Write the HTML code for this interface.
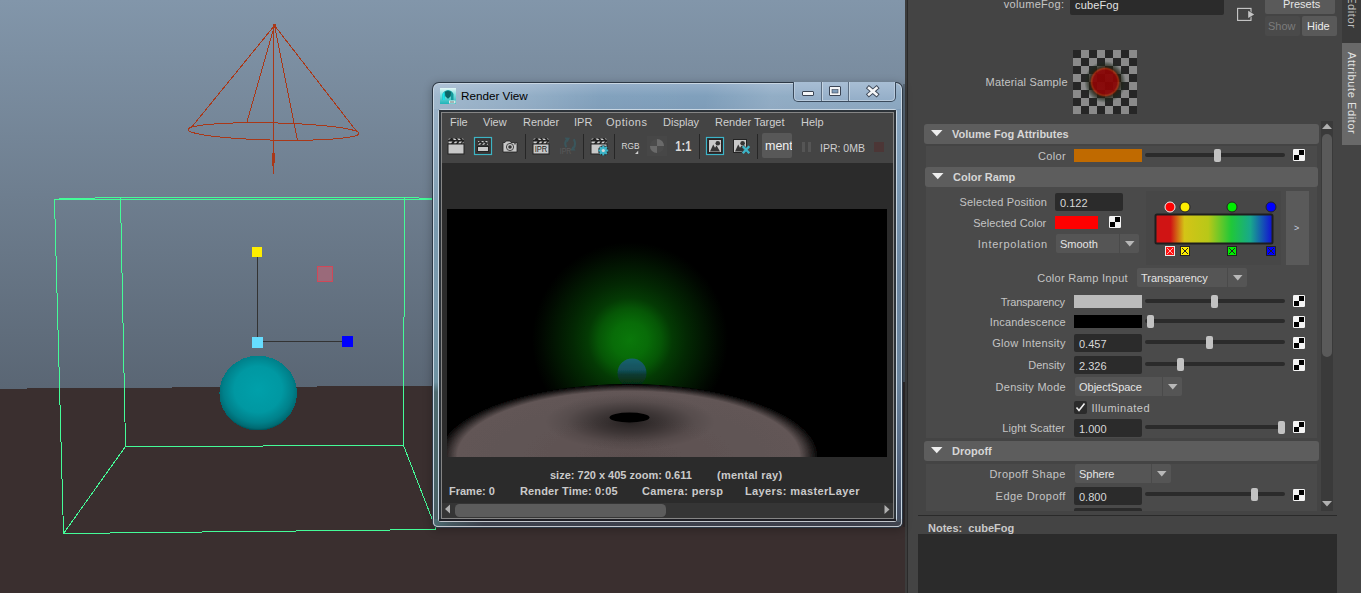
<!DOCTYPE html>
<html><head><meta charset="utf-8">
<style>
html,body{margin:0;padding:0;width:1361px;height:593px;overflow:hidden;background:#444;}
body{position:relative;font-family:"Liberation Sans",sans-serif;}
.a{position:absolute;}
.t{position:absolute;white-space:pre;font-size:11px;line-height:13px;color:#c8c8c8;}
</style></head><body>

<!-- VIEWPORT -->
<svg class="a" style="left:0;top:0" width="905" height="593" viewBox="0 0 905 593">
<defs>
<linearGradient id="sky" x1="0" y1="0" x2="0" y2="389" gradientUnits="userSpaceOnUse">
<stop offset="0" stop-color="#8296aa"/><stop offset="1" stop-color="#5a6674"/>
</linearGradient>
<radialGradient id="sph" cx="0.5" cy="0.45" r="0.56">
<stop offset="0" stop-color="#00a0aa"/><stop offset="0.55" stop-color="#0098a2"/><stop offset="0.8" stop-color="#00808a"/><stop offset="0.93" stop-color="#006a72"/><stop offset="1" stop-color="#00444a"/>
</radialGradient>
</defs>
<rect x="0" y="0" width="905" height="593" fill="url(#sky)"/>
<polygon points="0,389 27,389 27,388 172,388 172,387 317,387 317,386 462,386 462,385 607,385 607,384 752,384 752,383 897,383 897,382 905,382 905,593 0,593" fill="#3a2f2f" shape-rendering="crispEdges"/>
<g shape-rendering="crispEdges">
<rect x="54" y="199" width="386" height="1" fill="#44fc98"/><rect x="59" y="198" width="36" height="1" fill="#44fc98"/><rect x="95" y="197" width="324" height="1" fill="#44fc98"/><rect x="419" y="198" width="21" height="1" fill="#44fc98"/></g>
<g stroke="#44fc98" stroke-width="1" fill="none" shape-rendering="crispEdges">
<line x1="54.5" y1="199.5" x2="63.5" y2="533.5"/>
<line x1="120.5" y1="197.5" x2="125.5" y2="446.5"/>
<line x1="404.5" y1="197.5" x2="403.5" y2="445.5"/>
<line x1="125.5" y1="446.5" x2="403.5" y2="445.5"/>
<line x1="125.5" y1="446.5" x2="63.5" y2="533.5"/>
<line x1="63.5" y1="533.5" x2="436.5" y2="529.5"/>
<line x1="403.5" y1="445.5" x2="436" y2="529"/>
</g>
<g stroke="#aa3818" stroke-width="1" fill="none" shape-rendering="crispEdges">
<polyline points="358.98,133.44 358.85,133.89 358.49,134.33 357.90,134.76 357.07,135.18 356.01,135.60 354.73,136.00 353.23,136.39 351.51,136.77 349.57,137.13 347.43,137.48 345.08,137.81 342.54,138.12 339.81,138.42 336.89,138.69 333.80,138.95 330.55,139.19 327.14,139.40 323.58,139.60 319.89,139.77 316.07,139.92 312.13,140.04 308.09,140.14 303.95,140.22 299.73,140.28 295.43,140.31 291.08,140.31 286.68,140.30 282.24,140.25 277.78,140.19 273.30,140.10 268.83,139.98 264.37,139.85 259.94,139.69 255.54,139.51 251.19,139.30 246.90,139.08 242.69,138.83 238.55,138.57 234.52,138.28 230.59,137.98 226.78,137.65 223.10,137.32 219.56,136.96 216.16,136.59 212.92,136.21 209.85,135.81 206.95,135.40 204.23,134.98 201.71,134.56 199.38,134.12 197.25,133.67 195.33,133.22 193.63,132.77 192.15,132.31 190.88,131.85 189.85,131.39 189.04,130.93 188.47,130.47 188.13,130.01 188.02,129.56 188.15,129.11 188.51,128.67 189.10,128.24 189.93,127.82 190.99,127.40 192.27,127.00 193.77,126.61 195.49,126.23 197.43,125.87 199.57,125.52 201.92,125.19 204.46,124.88 207.19,124.58 210.11,124.31 213.20,124.05 216.45,123.81 219.86,123.60 223.42,123.40 227.11,123.23 230.93,123.08 234.87,122.96 238.91,122.86 243.05,122.78 247.27,122.72 251.57,122.69 255.92,122.69 260.32,122.70 264.76,122.75 269.22,122.81 273.70,122.90 278.17,123.02 282.63,123.15 287.06,123.31 291.46,123.49 295.81,123.70 300.10,123.92 304.31,124.17 308.45,124.43 312.48,124.72 316.41,125.02 320.22,125.35 323.90,125.68 327.44,126.04 330.84,126.41 334.08,126.79 337.15,127.19 340.05,127.60 342.77,128.02 345.29,128.44 347.62,128.88 349.75,129.33 351.67,129.78 353.37,130.23 354.85,130.69 356.12,131.15 357.15,131.61 357.96,132.07 358.53,132.53 358.87,132.99 358.98,133.44"/>
<line x1="274.5" y1="25.5" x2="190.5" y2="128.5"/>
<line x1="274.5" y1="25.5" x2="357.5" y2="132.5"/>
<line x1="274.5" y1="25.5" x2="246.5" y2="123.5"/>
<line x1="274.5" y1="25.5" x2="297.5" y2="140.5"/>
<line x1="273.5" y1="25.5" x2="273.5" y2="173.5"/>
</g>
<rect x="272" y="153" width="3" height="10" fill="#aa3818" shape-rendering="crispEdges"/>
<rect x="272" y="163" width="2" height="3" fill="#aa3818" shape-rendering="crispEdges"/>
<rect x="273" y="24" width="3" height="3" fill="#aa3818" shape-rendering="crispEdges"/>
<g shape-rendering="crispEdges">
<rect x="257" y="257" width="1" height="81" fill="#333"/>
<rect x="262" y="341" width="81" height="1" fill="#333"/>
<rect x="252" y="247" width="10" height="10" fill="#ffee00"/>
<rect x="252" y="337" width="11" height="11" fill="#66ddff"/>
<rect x="342" y="336" width="11" height="11" fill="#0000ff"/>
<rect x="317" y="266" width="16" height="16" fill="#d04858"/>
<rect x="318" y="267" width="14" height="14" fill="#9a6a7a"/>
</g>
<ellipse cx="258.2" cy="393.1" rx="38.8" ry="37.4" fill="url(#sph)" shape-rendering="crispEdges"/>
</svg>

<!-- separator -->
<div class="a" style="left:905px;top:0;width:2px;height:593px;background:#3c3c3c"></div>
<div class="a" style="left:907px;top:0;width:1px;height:593px;background:#2a2a2a"></div>
<div class="a" style="left:903px;top:84px;width:2px;height:443px;background:rgba(10,20,30,0.28)"></div>

<!-- ATTRIBUTE EDITOR PANEL -->
<div class="a" style="left:908px;top:0px;width:453px;height:593px;background:#444;"></div>
<div class="t" style="left:1003.8px;top:-2px;color:#c4c4c4;letter-spacing:0.30px;">volumeFog:</div>
<div class="a" style="left:1070px;top:-3px;width:154px;height:18px;background:#2b2b2b;border-radius:2px"></div>
<div class="t" style="left:1075px;top:-1px;color:#e2e2e2;letter-spacing:0.15px">cubeFog</div>
<svg class="a" style="left:1236px;top:7px" width="20" height="15" viewBox="0 0 20 15"><rect x="1.6" y="1.4" width="13.4" height="12" fill="#444" stroke="#cacaca" stroke-width="1.1"/><path d="M11.2,2.6 L19.2,7.4 L11.2,12.2 Z" fill="#444"/><path d="M12.2,3.8 L18.2,7.4 L12.2,11 Z" fill="#c4c4c4"/></svg>
<div class="a" style="left:1265px;top:-3px;width:70px;height:17px;background:#5a5a5a;border-radius:2px"></div>
<div class="t" style="left:1283px;top:-2px;color:#e6e6e6;">Presets</div>
<div class="a" style="left:1265px;top:16px;width:35px;height:20px;background:#4a4a4a;border-radius:2px"></div>
<div class="t" style="left:1268px;top:20px;color:#7c7c7c;">Show</div>
<div class="a" style="left:1302px;top:16px;width:35px;height:20px;background:#595959;border-radius:2px"></div>
<div class="t" style="left:1307px;top:20px;color:#ececec;">Hide</div>
<div class="a" style="left:1342px;top:0px;width:19px;height:43px;background:#3a3a3a;"></div>
<div class="a" style="left:1342px;top:43px;width:19px;height:102px;background:#696969;"></div>
<div class="t" style="left:1345px;top:-60px;width:13px;height:89px;writing-mode:vertical-rl;text-align:right;line-height:13px;letter-spacing:0.6px;color:#bdbdbd">Layer Editor</div>
<div class="t" style="left:1345px;top:52px;width:13px;writing-mode:vertical-rl;line-height:13px;letter-spacing:0.6px;color:#e2e2e2">Attribute Editor</div>
<div class="t" style="left:985.6px;top:76px;color:#c4c4c4;letter-spacing:0.18px;">Material Sample</div>
<svg class="a" style="left:1073px;top:50px" width="64" height="64" viewBox="0 0 64 64"><defs><radialGradient id="msr" cx="32" cy="32" r="21" gradientUnits="userSpaceOnUse"><stop offset="0" stop-color="#880404" stop-opacity="0.95"/><stop offset="0.56" stop-color="#8a0606" stop-opacity="0.95"/><stop offset="0.64" stop-color="#a02a0a" stop-opacity="0.9"/><stop offset="0.72" stop-color="#2a2010" stop-opacity="0.8"/><stop offset="0.86" stop-color="#1a261a" stop-opacity="0.45"/><stop offset="1" stop-color="#203020" stop-opacity="0"/></radialGradient></defs><rect width="64" height="64" fill="#8a8a8a"/><rect x="0" y="0" width="8" height="8" fill="#262626"/><rect x="16" y="0" width="8" height="8" fill="#262626"/><rect x="32" y="0" width="8" height="8" fill="#262626"/><rect x="48" y="0" width="8" height="8" fill="#262626"/><rect x="8" y="8" width="8" height="8" fill="#262626"/><rect x="24" y="8" width="8" height="8" fill="#262626"/><rect x="40" y="8" width="8" height="8" fill="#262626"/><rect x="56" y="8" width="8" height="8" fill="#262626"/><rect x="0" y="16" width="8" height="8" fill="#262626"/><rect x="16" y="16" width="8" height="8" fill="#262626"/><rect x="32" y="16" width="8" height="8" fill="#262626"/><rect x="48" y="16" width="8" height="8" fill="#262626"/><rect x="8" y="24" width="8" height="8" fill="#262626"/><rect x="24" y="24" width="8" height="8" fill="#262626"/><rect x="40" y="24" width="8" height="8" fill="#262626"/><rect x="56" y="24" width="8" height="8" fill="#262626"/><rect x="0" y="32" width="8" height="8" fill="#262626"/><rect x="16" y="32" width="8" height="8" fill="#262626"/><rect x="32" y="32" width="8" height="8" fill="#262626"/><rect x="48" y="32" width="8" height="8" fill="#262626"/><rect x="8" y="40" width="8" height="8" fill="#262626"/><rect x="24" y="40" width="8" height="8" fill="#262626"/><rect x="40" y="40" width="8" height="8" fill="#262626"/><rect x="56" y="40" width="8" height="8" fill="#262626"/><rect x="0" y="48" width="8" height="8" fill="#262626"/><rect x="16" y="48" width="8" height="8" fill="#262626"/><rect x="32" y="48" width="8" height="8" fill="#262626"/><rect x="48" y="48" width="8" height="8" fill="#262626"/><rect x="8" y="56" width="8" height="8" fill="#262626"/><rect x="24" y="56" width="8" height="8" fill="#262626"/><rect x="40" y="56" width="8" height="8" fill="#262626"/><rect x="56" y="56" width="8" height="8" fill="#262626"/><circle cx="32.5" cy="32" r="21" fill="url(#msr)"/></svg>
<div class="a" style="left:924px;top:124px;width:395px;height:20px;background:#5d5d5d;border-radius:3px"></div>
<svg class="a" style="left:931px;top:130px" width="12" height="7" viewBox="0 0 12 7"><path d="M0,0 h11.5 l-5.75,6.2z" fill="#eeeeee"/></svg>
<div class="t" style="left:952px;top:128px;color:#d6d6d6;font-weight:bold">Volume Fog Attributes</div>
<div class="a" style="left:926px;top:146px;width:391px;height:292px;background:#4a4a4a;"></div>
<div class="t" style="left:1038.0px;top:150px;color:#c4c4c4;letter-spacing:0.32px;">Color</div>
<div class="a" style="left:1074px;top:149px;width:68px;height:13px;background:#c06a00;"></div>
<div class="a" style="left:1145px;top:153px;width:140px;height:4px;background:#2b2b2b;border-radius:2px"></div>
<div class="a" style="left:1214px;top:149px;width:7px;height:13px;background:#c2c2c2;border-radius:2px"></div>
<svg class="a" style="left:1293px;top:149px" width="12" height="12" viewBox="0 0 12 12"><rect x="0" y="0" width="12" height="12" rx="1.2" fill="#f4f4f4"/><rect x="6" y="1" width="5" height="5" fill="#000"/><rect x="1" y="6" width="5" height="5" fill="#000"/></svg>
<div class="a" style="left:925px;top:167px;width:393px;height:20px;background:#5d5d5d;border-radius:3px"></div>
<svg class="a" style="left:932px;top:173px" width="12" height="7" viewBox="0 0 12 7"><path d="M0,0 h11.5 l-5.75,6.2z" fill="#eeeeee"/></svg>
<div class="t" style="left:953px;top:171px;color:#d6d6d6;font-weight:bold">Color Ramp</div>
<div class="t" style="left:959.6px;top:196px;color:#c4c4c4;letter-spacing:0.14px;">Selected Position</div>
<div class="a" style="left:1055px;top:193px;width:68px;height:18px;background:#2b2b2b;border-radius:2px"></div>
<div class="t" style="left:1060px;top:197px;color:#d8d8d8;">0.122</div>
<div class="t" style="left:973.2px;top:217px;color:#c4c4c4;letter-spacing:0.07px;">Selected Color</div>
<div class="a" style="left:1055px;top:216px;width:43px;height:13px;background:#ff0000;"></div>
<svg class="a" style="left:1109px;top:216px" width="12" height="12" viewBox="0 0 12 12"><rect x="0" y="0" width="12" height="12" rx="1.2" fill="#f4f4f4"/><rect x="6" y="1" width="5" height="5" fill="#000"/><rect x="1" y="6" width="5" height="5" fill="#000"/></svg>
<div class="t" style="left:977.8px;top:238px;color:#c4c4c4;letter-spacing:0.73px;">Interpolation</div>
<div class="a" style="left:1056px;top:234px;width:83px;height:19px;background:#555;border-radius:2px"></div>
<div class="a" style="left:1119px;top:234px;width:1px;height:19px;background:#4a4a4a;"></div>
<svg class="a" style="left:1125px;top:241px" width="10" height="6" viewBox="0 0 10 6"><path d="M0,0 h9.5 l-4.75,5.5z" fill="#b8b8b8"/></svg>
<div class="t" style="left:1060px;top:238px;color:#e4e4e4;">Smooth</div>
<div class="a" style="left:1146px;top:191px;width:135px;height:74px;background:#474747;"></div>
<div class="a" style="left:1286px;top:191px;width:23px;height:74px;background:#5a5a5a;"></div>
<div class="t" style="left:1294px;top:222px;color:#c8d0e0;font-size:9px">&gt;</div>
<svg class="a" style="left:1150px;top:198px" width="130" height="62" viewBox="1150 198 130 62"><defs><linearGradient id="rg" x1="1157" y1="0" x2="1271" y2="0" gradientUnits="userSpaceOnUse"><stop offset="0" stop-color="#d01414"/><stop offset="0.12" stop-color="#d01414"/><stop offset="0.24" stop-color="#d4c416"/><stop offset="0.45" stop-color="#b8c818"/><stop offset="0.65" stop-color="#20c838"/><stop offset="0.82" stop-color="#18a88c"/><stop offset="1" stop-color="#1218d0"/></linearGradient></defs><rect x="1155.5" y="214.5" width="117" height="29" rx="1.5" fill="url(#rg)" stroke="#1e1e1e" stroke-width="2"/><circle cx="1170" cy="207" r="5" fill="#ff0000" stroke="#f0f0f0" stroke-width="1"/><circle cx="1185" cy="207" r="5" fill="#ffee00" stroke="#222" stroke-width="1"/><circle cx="1232" cy="207" r="5" fill="#00ee00" stroke="#222" stroke-width="1"/><circle cx="1271" cy="207" r="5" fill="#0000ff" stroke="#222" stroke-width="1"/><rect x="1165.5" y="246.5" width="9" height="9" fill="#ff1010" stroke="#e8e8e8"/><path d="M1167,248 l6,6 M1173,248 l-6,6" stroke="#ffb0b0" stroke-width="1"/><rect x="1180.5" y="246.5" width="9" height="9" fill="#ffee00" stroke="#222"/><path d="M1182,248 l6,6 M1188,248 l-6,6" stroke="#222" stroke-width="1"/><rect x="1227.5" y="246.5" width="9" height="9" fill="#00ee00" stroke="#222"/><path d="M1229,248 l6,6 M1235,248 l-6,6" stroke="#222" stroke-width="1"/><rect x="1266.5" y="246.5" width="9" height="9" fill="#0000ff" stroke="#222"/><path d="M1268,248 l6,6 M1274,248 l-6,6" stroke="#222" stroke-width="1"/></svg>
<div class="t" style="left:1037.2px;top:272px;color:#c4c4c4;letter-spacing:0.28px;">Color Ramp Input</div>
<div class="a" style="left:1137px;top:268px;width:110px;height:19px;background:#555;border-radius:2px"></div>
<div class="a" style="left:1227px;top:268px;width:1px;height:19px;background:#4a4a4a;"></div>
<svg class="a" style="left:1233px;top:275px" width="10" height="6" viewBox="0 0 10 6"><path d="M0,0 h9.5 l-4.75,5.5z" fill="#b8b8b8"/></svg>
<div class="t" style="left:1141px;top:272px;color:#e4e4e4;">Transparency</div>
<div class="t" style="left:1000.8px;top:296px;color:#c4c4c4;letter-spacing:-0.24px;">Transparency</div>
<div class="a" style="left:1074px;top:295px;width:68px;height:13px;background:#bbbbbb;"></div>
<div class="a" style="left:1145px;top:299px;width:140px;height:4px;background:#2b2b2b;border-radius:2px"></div>
<div class="a" style="left:1211px;top:295px;width:7px;height:13px;background:#c2c2c2;border-radius:2px"></div>
<svg class="a" style="left:1293px;top:295px" width="12" height="12" viewBox="0 0 12 12"><rect x="0" y="0" width="12" height="12" rx="1.2" fill="#f4f4f4"/><rect x="6" y="1" width="5" height="5" fill="#000"/><rect x="1" y="6" width="5" height="5" fill="#000"/></svg>
<div class="t" style="left:989.8px;top:316px;color:#c4c4c4;letter-spacing:0.16px;">Incandescence</div>
<div class="a" style="left:1074px;top:315px;width:68px;height:13px;background:#000;"></div>
<div class="a" style="left:1145px;top:319px;width:140px;height:4px;background:#2b2b2b;border-radius:2px"></div>
<div class="a" style="left:1147px;top:315px;width:7px;height:13px;background:#c2c2c2;border-radius:2px"></div>
<svg class="a" style="left:1293px;top:316px" width="12" height="12" viewBox="0 0 12 12"><rect x="0" y="0" width="12" height="12" rx="1.2" fill="#f4f4f4"/><rect x="6" y="1" width="5" height="5" fill="#000"/><rect x="1" y="6" width="5" height="5" fill="#000"/></svg>
<div class="t" style="left:992.2px;top:337px;color:#c4c4c4;letter-spacing:0.32px;">Glow Intensity</div>
<div class="a" style="left:1074px;top:334px;width:68px;height:18px;background:#2b2b2b;border-radius:2px"></div>
<div class="t" style="left:1079px;top:338px;color:#d8d8d8;">0.457</div>
<div class="a" style="left:1145px;top:340px;width:140px;height:4px;background:#2b2b2b;border-radius:2px"></div>
<div class="a" style="left:1206px;top:336px;width:7px;height:13px;background:#c2c2c2;border-radius:2px"></div>
<svg class="a" style="left:1293px;top:337px" width="12" height="12" viewBox="0 0 12 12"><rect x="0" y="0" width="12" height="12" rx="1.2" fill="#f4f4f4"/><rect x="6" y="1" width="5" height="5" fill="#000"/><rect x="1" y="6" width="5" height="5" fill="#000"/></svg>
<div class="t" style="left:1028.2px;top:359px;color:#c4c4c4;letter-spacing:0.02px;">Density</div>
<div class="a" style="left:1074px;top:356px;width:68px;height:18px;background:#2b2b2b;border-radius:2px"></div>
<div class="t" style="left:1079px;top:360px;color:#d8d8d8;">2.326</div>
<div class="a" style="left:1145px;top:362px;width:140px;height:4px;background:#2b2b2b;border-radius:2px"></div>
<div class="a" style="left:1177px;top:358px;width:7px;height:13px;background:#c2c2c2;border-radius:2px"></div>
<svg class="a" style="left:1293px;top:359px" width="12" height="12" viewBox="0 0 12 12"><rect x="0" y="0" width="12" height="12" rx="1.2" fill="#f4f4f4"/><rect x="6" y="1" width="5" height="5" fill="#000"/><rect x="1" y="6" width="5" height="5" fill="#000"/></svg>
<div class="t" style="left:995.6px;top:381px;color:#c4c4c4;letter-spacing:0.26px;">Density Mode</div>
<div class="a" style="left:1075px;top:377px;width:107px;height:19px;background:#555;border-radius:2px"></div>
<div class="a" style="left:1162px;top:377px;width:1px;height:19px;background:#4a4a4a;"></div>
<svg class="a" style="left:1168px;top:384px" width="10" height="6" viewBox="0 0 10 6"><path d="M0,0 h9.5 l-4.75,5.5z" fill="#b8b8b8"/></svg>
<div class="t" style="left:1079px;top:381px;color:#e4e4e4;">ObjectSpace</div>
<div class="a" style="left:1074px;top:401px;width:13px;height:13px;background:#2b2b2b;border-radius:2px"></div>
<svg class="a" style="left:1074px;top:401px" width="13" height="13" viewBox="0 0 13 13"><path d="M2.5,6.5 l2.5,3 l5.5,-7" fill="none" stroke="#f0f0f0" stroke-width="1.6"/></svg>
<div class="t" style="left:1091.4px;top:402px;color:#c8c8c8;letter-spacing:0.50px;">Illuminated</div>
<div class="t" style="left:1002.2px;top:422px;color:#c4c4c4;letter-spacing:0.09px;">Light Scatter</div>
<div class="a" style="left:1074px;top:419px;width:68px;height:18px;background:#2b2b2b;border-radius:2px"></div>
<div class="t" style="left:1079px;top:423px;color:#d8d8d8;">1.000</div>
<div class="a" style="left:1145px;top:425px;width:140px;height:4px;background:#2b2b2b;border-radius:2px"></div>
<div class="a" style="left:1278px;top:421px;width:7px;height:13px;background:#c2c2c2;border-radius:2px"></div>
<svg class="a" style="left:1293px;top:421px" width="12" height="12" viewBox="0 0 12 12"><rect x="0" y="0" width="12" height="12" rx="1.2" fill="#f4f4f4"/><rect x="6" y="1" width="5" height="5" fill="#000"/><rect x="1" y="6" width="5" height="5" fill="#000"/></svg>
<div class="a" style="left:924px;top:441px;width:395px;height:20px;background:#5d5d5d;border-radius:3px"></div>
<svg class="a" style="left:931px;top:447px" width="12" height="7" viewBox="0 0 12 7"><path d="M0,0 h11.5 l-5.75,6.2z" fill="#eeeeee"/></svg>
<div class="t" style="left:952px;top:445px;color:#d6d6d6;font-weight:bold">Dropoff</div>
<div class="a" style="left:926px;top:464px;width:391px;height:47px;background:#4a4a4a;"></div>
<div class="t" style="left:989.4px;top:468px;color:#c4c4c4;letter-spacing:0.44px;">Dropoff Shape</div>
<div class="a" style="left:1075px;top:464px;width:96px;height:19px;background:#555;border-radius:2px"></div>
<div class="a" style="left:1151px;top:464px;width:1px;height:19px;background:#4a4a4a;"></div>
<svg class="a" style="left:1157px;top:471px" width="10" height="6" viewBox="0 0 10 6"><path d="M0,0 h9.5 l-4.75,5.5z" fill="#b8b8b8"/></svg>
<div class="t" style="left:1079px;top:468px;color:#e4e4e4;">Sphere</div>
<div class="t" style="left:995.6px;top:490px;color:#c4c4c4;letter-spacing:0.47px;">Edge Dropoff</div>
<div class="a" style="left:1074px;top:487px;width:68px;height:18px;background:#2b2b2b;border-radius:2px"></div>
<div class="t" style="left:1079px;top:491px;color:#d8d8d8;">0.800</div>
<div class="a" style="left:1145px;top:492px;width:140px;height:4px;background:#2b2b2b;border-radius:2px"></div>
<div class="a" style="left:1251px;top:488px;width:7px;height:13px;background:#c2c2c2;border-radius:2px"></div>
<svg class="a" style="left:1293px;top:489px" width="12" height="12" viewBox="0 0 12 12"><rect x="0" y="0" width="12" height="12" rx="1.2" fill="#f4f4f4"/><rect x="6" y="1" width="5" height="5" fill="#000"/><rect x="1" y="6" width="5" height="5" fill="#000"/></svg>
<div class="a" style="left:1074px;top:508px;width:68px;height:3px;background:#2b2b2b;border-radius:2px 2px 0 0"></div>
<div class="a" style="left:1321px;top:121px;width:12px;height:390px;background:#3a3a3a;"></div>
<svg class="a" style="left:1321px;top:121px" width="12" height="390" viewBox="0 0 12 390"><path d="M1,8 h10 l-5,-5.5z" fill="#b0b0b0"/><path d="M1,380 h10 l-5,5.5z" fill="#b0b0b0"/></svg>
<div class="a" style="left:1322px;top:134px;width:10px;height:223px;background:#5a5a5a;border-radius:5px"></div>
<div class="a" style="left:918px;top:515px;width:419px;height:1px;background:#2a2a2a;"></div>
<div class="t" style="left:928px;top:522px;color:#cacaca;font-weight:bold">Notes:  cubeFog</div>
<div class="a" style="left:918px;top:534px;width:419px;height:59px;background:#2b2b2b;"></div>
<!-- RENDER VIEW WINDOW -->
<div class="a" style="left:432px;top:82px;width:471px;height:446px;border-radius:7px 7px 6px 6px;background:#2c3845;box-shadow:0 2px 9px 1px rgba(0,0,0,0.22)"></div>
<div class="a" style="left:433px;top:83px;width:469px;height:444px;border-radius:6px 6px 5px 5px;background:#c8d6e2"></div>
<div class="a" id="glass" style="left:434px;top:84px;width:467px;height:442px;border-radius:5px 5px 4px 4px;background:linear-gradient(180deg,#94aec8 0px,#80a0bc 12px,#7e9cb8 25px,#7e9cb4 60px,#7a9aae 130px,#7898ac 220px,#6e92a2 298px,#4e6a70 308px,#4a6468 400px,#4a5c62 442px)"></div>
<!-- title bar streaks -->
<div class="a" style="left:434px;top:84px;width:467px;height:25px;border-radius:5px 5px 0 0;background:linear-gradient(100deg,rgba(255,255,255,0.26) 0%,rgba(255,255,255,0.16) 20%,rgba(255,255,255,0.02) 36%,rgba(255,255,255,0) 58%,rgba(255,255,255,0.14) 72%,rgba(255,255,255,0.1) 100%)"></div>
<div class="a" style="left:434px;top:109px;width:4px;height:120px;background:linear-gradient(180deg,rgba(255,255,255,0.2),rgba(255,255,255,0))"></div>
<!-- right glass tint -->
<div class="a" style="left:897px;top:110px;width:4px;height:414px;background:linear-gradient(180deg,#86a2bc 0,#7e9cb6 50px,#6c86a0 170px,#6a849c 270px,#5a6e88 330px,#4a5870 380px,#424a5c 414px)"></div>
<!-- app icon -->
<svg class="a" style="left:440px;top:88px" width="16" height="16" viewBox="0 0 16 16">
<defs><linearGradient id="ic" x1="0" y1="0" x2="0" y2="1"><stop offset="0" stop-color="#e4f8f6"/><stop offset="0.45" stop-color="#7adede"/><stop offset="1" stop-color="#20b4b8"/></linearGradient></defs>
<rect width="16" height="16" fill="url(#ic)"/>
<path d="M2.5,12 V6 Q4,2.5 8,2 Q12,2.5 13.5,6 V12 H11 V7.5 L8,11 L5,7.5 V12 Z" fill="#159a9c"/>
<path d="M2.5,12 V6 Q3.2,4.5 4.5,4 L5,12 Z" fill="#18e4ea"/>
<path d="M5,4 Q8,1.8 11,4 L10.5,8.5 L8,10.5 L5.5,8.5 Z" fill="#0a6466"/>
<rect x="9" y="12.5" width="6.5" height="3" fill="#d8e8e8"/>
<rect x="10" y="13.5" width="4" height="1" fill="#708080"/>
</svg>
<div class="t" style="left:461px;top:89px;font-size:11.7px;line-height:14px;color:#000">Render View</div>
<!-- caption buttons -->
<div class="a" style="left:793px;top:82px;width:103px;height:20px;border-radius:0 0 5px 5px;background:#3a4a5c"></div>
<div class="a" style="left:794px;top:82px;width:101px;height:19px;border-radius:0 0 4px 4px;background:#b8cadc"></div>
<div class="a" style="left:795px;top:82px;width:99px;height:18px;border-radius:0 0 3px 3px;background:linear-gradient(180deg,#a8bed4,#94aec8)"></div>
<div class="a" style="left:821px;top:82px;width:1px;height:19px;background:#5a6c80"></div>
<div class="a" style="left:822px;top:82px;width:1px;height:19px;background:#c4d4e2"></div>
<div class="a" style="left:848px;top:82px;width:1px;height:19px;background:#5a6c80"></div>
<div class="a" style="left:849px;top:82px;width:1px;height:19px;background:#c4d4e2"></div>
<svg class="a" style="left:795px;top:82px" width="100" height="19" viewBox="795 82 100 19">
<rect x="802.5" y="91.5" width="11" height="4" rx="0.5" fill="#f4f6f8" stroke="#3a4454" stroke-width="1"/>
<rect x="829.5" y="86.5" width="11" height="9" rx="0.5" fill="#f4f6f8" stroke="#3a4454" stroke-width="1"/>
<rect x="832" y="89.5" width="6" height="3.5" fill="#7e9cba" stroke="#3a4454" stroke-width="0.6"/>
<path d="M869,88 L876.5,94.5 M876.5,88 L869,94.5" stroke="#3a4454" stroke-width="4.4" stroke-linecap="square"/>
<path d="M869,88 L876.5,94.5 M876.5,88 L869,94.5" stroke="#f4f6f8" stroke-width="2.6" stroke-linecap="square"/>
</svg>
<!-- client frame -->
<div class="a" style="left:438px;top:109px;width:459px;height:413px;border-radius:3px;background:#c8d6e2"></div>
<div class="a" style="left:439px;top:110px;width:457px;height:411px;background:#2c3238"></div>
<div class="a" style="left:441px;top:112px;width:453px;height:407px;background:#858585"></div>
<div class="a" style="left:433px;top:519px;width:469px;height:8px;border-radius:0 0 5px 5px;background:#c2c6cc"></div>
<div class="a" style="left:434px;top:519px;width:467px;height:7px;border-radius:0 0 4px 4px;background:linear-gradient(90deg,#4c6c72 0px,#44565e 18px,#3c404c 50px,#3c3e4a 420px,#40444f 467px)"></div>
<div class="a" style="left:434px;top:519px;width:4px;height:3px;background:#4c6c72"></div>
<div class="a" style="left:897px;top:519px;width:4px;height:3px;background:#44505e"></div>
<div class="a" style="left:438px;top:519px;width:459px;height:3px;border-radius:0 0 3px 3px;background:#c2c6cc"></div>
<div class="a" style="left:439px;top:519px;width:457px;height:2px;background:#1e1e24"></div>

<div class="a" id="client" style="left:442px;top:113px;width:451px;height:405px;background:#444"></div>
<div class="a" style="left:442px;top:163px;width:451px;height:341px;background:#2b2b2b"></div>
<!-- menu -->
<div class="t" style="left:450px;top:116px;color:#cfcfcf">File</div>
<div class="t" style="left:483px;top:116px;color:#cfcfcf">View</div>
<div class="t" style="left:523px;top:116px;color:#cfcfcf">Render</div>
<div class="t" style="left:574px;top:116px;color:#cfcfcf">IPR</div>
<div class="t" style="left:606px;top:116px;color:#cfcfcf;letter-spacing:0.5px">Options</div>
<div class="t" style="left:663px;top:116px;color:#cfcfcf">Display</div>
<div class="t" style="left:715px;top:116px;color:#cfcfcf">Render Target</div>
<div class="t" style="left:801px;top:116px;color:#cfcfcf">Help</div>
<!-- toolbar -->
<svg class="a" style="left:442px;top:131px" width="451" height="32" viewBox="442 131 451 32">
<defs>
<g id="clap">
<rect x="0" y="0" width="16" height="6" fill="#222"/>
<path d="M0.5,0.5h2.5l-2.5,1.5z M4.5,0.5h2.5l1.5,1.5h-2.5z M9,0.5h2.5l1.5,1.5h-2.5z M13.5,0.5h2l0,1.5z" fill="#d0d0d0"/>
<path d="M0.5,3.5l0,2h2.5l1.5,-2z M5.5,5.5l1.5,-2h2.5l-1.5,2z M10,5.5l1.5,-2h2.5l-1.5,2z M15.5,3.5v2h-1.5z" fill="#d0d0d0"/>
</g>
</defs>
<!-- icon1 clapper -->
<use href="#clap" x="448" y="138"/>
<rect x="447.5" y="143.5" width="17" height="11" fill="#222"/>
<rect x="448.5" y="144.5" width="15" height="9" fill="#c8c8c8"/>
<!-- icon2 region -->
<rect x="474.5" y="137.5" width="17" height="17" fill="none" stroke="#3cb4c4" stroke-width="1.2"/>
<rect x="476" y="139" width="14" height="14" fill="none" stroke="#2e2626" stroke-width="1"/>
<rect x="477.5" y="140.5" width="11" height="5" fill="#2a2a2a"/>
<path d="M478,141 h2 l-2,1.2z M481,141 h2 l1.5,1.2 h-2z M485,141 h2 l1.2,1.2 h-2z M478,144.8 l1.5,-1.6 h2 l-1.5,1.6z M482,144.8 l1.5,-1.6 h2 l-1.5,1.6z M486.5,144.8 l1.5,-1.6 v1.6z" fill="#cfcfcf"/>
<rect x="477.5" y="146.5" width="11" height="5" fill="#c8c8c8" stroke="#222" stroke-width="1"/>
<!-- camera -->
<path d="M503,142.5 h2 l1,-1.5 h4 l1,1.5 h6 v9.5 h-14 z" fill="#c8c8c8" stroke="#222" stroke-width="0.8"/>
<circle cx="510" cy="147" r="3.6" fill="none" stroke="#333" stroke-width="0.9"/>
<circle cx="510" cy="147" r="1.8" fill="#333"/>
<rect x="514" y="143.3" width="2" height="1" fill="#333"/>
<!-- sep -->
<rect x="525" y="134" width="1" height="25" fill="#262626"/>
<!-- IPR -->
<use href="#clap" x="533" y="138"/>
<rect x="532.5" y="143.5" width="17" height="11" fill="#222"/>
<rect x="533.5" y="144.5" width="15" height="9" fill="#c8c8c8"/>
<text x="0" y="0" transform="translate(541 152.3) scale(0.78 1)" font-family="Liberation Sans" font-size="9.6" text-anchor="middle" fill="#151515">IPR</text>
<!-- IPR refresh disabled -->
<g fill="none" stroke="#3a565c" stroke-width="2.1">
<path d="M566.3,147.2 Q563.8,142.5 567.2,139.6"/>
<path d="M573.8,139.2 Q576.6,143.8 573.2,148.6"/>
</g>
<path d="M564.6,137.6 L570,137.8 L567.6,142.2 Z M575.6,150.6 L570.4,150.4 L572.6,146.2 Z" fill="#3a565c"/>
<text x="0" y="0" transform="translate(565.5 153.8) scale(0.85 1)" font-family="Liberation Sans" font-size="8.2" text-anchor="middle" fill="#5a5a5a">IPR</text>
<rect x="583" y="134" width="1" height="25" fill="#262626"/>
<!-- render settings -->
<use href="#clap" x="591" y="138"/>
<rect x="590.5" y="143.5" width="17" height="11" fill="#222"/>
<rect x="591.5" y="144.5" width="15" height="9" fill="#c8c8c8"/>
<g transform="translate(603.3 150.5) scale(0.8)">
<circle r="6.6" fill="#2a2a2a" opacity="0.9"/>
<rect x="-1.3" y="-6.2" width="2.6" height="3" fill="#3cb4c8" transform="rotate(0)"/><rect x="-1.3" y="-6.2" width="2.6" height="3" fill="#3cb4c8" transform="rotate(45)"/><rect x="-1.3" y="-6.2" width="2.6" height="3" fill="#3cb4c8" transform="rotate(90)"/><rect x="-1.3" y="-6.2" width="2.6" height="3" fill="#3cb4c8" transform="rotate(135)"/><rect x="-1.3" y="-6.2" width="2.6" height="3" fill="#3cb4c8" transform="rotate(180)"/><rect x="-1.3" y="-6.2" width="2.6" height="3" fill="#3cb4c8" transform="rotate(225)"/><rect x="-1.3" y="-6.2" width="2.6" height="3" fill="#3cb4c8" transform="rotate(270)"/><rect x="-1.3" y="-6.2" width="2.6" height="3" fill="#3cb4c8" transform="rotate(315)"/>
<circle r="4.3" fill="#3cb4c8"/>
<circle r="2" fill="#d8d8d8"/>
</g>
<rect x="614" y="134" width="1" height="25" fill="#262626"/>
<!-- RGB -->
<text x="621.5" y="149.3" font-family="Liberation Sans" font-size="8.3" fill="#d8d8d8">RGB</text>
<path d="M635,154 l3.2,0 l0,-3.2 z" fill="#d0d0d0"/>
<!-- exposure -->
<rect x="647" y="136" width="20" height="20" fill="#474747"/>
<circle cx="657" cy="146" r="7.1" fill="#4b4b4b"/>
<path d="M657,146 v-7.1 a7.1,7.1 0 0 1 7.1,7.1 z M657,146 v7.1 a7.1,7.1 0 0 1 -7.1,-7.1 z" fill="#6a6a6a"/>
<text x="0" y="0" transform="translate(675.3 151.3) scale(0.78 1)" font-family="Liberation Sans" font-size="14.2" font-weight="bold" fill="#dadada">1:1</text>
<rect x="699" y="134" width="1" height="25" fill="#262626"/>
<!-- image icon selected -->
<rect x="706.5" y="137.5" width="17" height="17" fill="#2a2222" stroke="#3cb4c8" stroke-width="1.2"/>
<rect x="709" y="140" width="12" height="12" fill="#c8c8c8"/>
<path d="M710,151.5 l3.2,-7 l1.8,3.2 l1.6,-2.2 l3.4,6 z" fill="#333"/>
<circle cx="717.8" cy="143.2" r="2.3" fill="#333"/>
<!-- image remove -->
<rect x="733.5" y="139.5" width="13" height="13" fill="#c8c8c8" stroke="#222" stroke-width="1"/>
<path d="M735,151.5 l3.2,-7 l1.8,3.2 l1.6,-2.2 l3.4,6 z" fill="#333"/>
<circle cx="742.6" cy="143.2" r="2.3" fill="#333"/>
<path d="M742.5,146 l7,7.5 M749.5,146 l-7,7.5" stroke="#444" stroke-width="3.6"/>
<path d="M742.8,146.3 l6.5,7 M749.3,146.3 l-6.5,7" stroke="#3cb4c8" stroke-width="2.4"/>
<rect x="757" y="134" width="1" height="25" fill="#262626"/>
<!-- ment button -->
<rect x="762" y="133" width="30" height="25" rx="2" fill="#585858"/>
<!-- pause -->
<rect x="802" y="142" width="3" height="10" fill="#555"/>
<rect x="808" y="142" width="3" height="10" fill="#555"/>
<rect x="874" y="142" width="10" height="10" fill="#4c3636"/>
</svg>
<div class="t" style="left:765px;top:139px;font-size:12.5px;line-height:14px;color:#f0f0f0;width:27px;overflow:hidden">ment</div>
<div class="t" style="left:820px;top:142px;font-size:10.5px;line-height:13px;color:#cfcfcf">IPR: 0MB</div>
<!-- render image -->
<svg class="a" style="left:447px;top:209px" width="440" height="248" viewBox="447 209 440 248">
<defs>
<radialGradient id="glow" cx="630" cy="340" r="98" gradientUnits="userSpaceOnUse">
<stop offset="0" stop-color="#0a780a"/><stop offset="0.18" stop-color="#086c08"/><stop offset="0.32" stop-color="#065606"/><stop offset="0.43" stop-color="#043a04"/><stop offset="0.58" stop-color="#032803"/><stop offset="0.76" stop-color="#021602"/><stop offset="0.9" stop-color="#010801"/><stop offset="1" stop-color="#000"/>
</radialGradient>
<radialGradient id="disc" cx="628.5" cy="456" r="1" gradientUnits="userSpaceOnUse" gradientTransform="translate(628.5 456) scale(190 72) translate(-628.5 -456)">
<stop offset="0" stop-color="#5c5050"/><stop offset="0.7" stop-color="#615555"/><stop offset="0.9" stop-color="#625656"/><stop offset="1" stop-color="#000"/>
</radialGradient>
<radialGradient id="shadow" cx="630" cy="422" r="1" gradientUnits="userSpaceOnUse" gradientTransform="translate(630 422) scale(85 28) translate(-630 -422)">
<stop offset="0" stop-color="#000" stop-opacity="0.6"/><stop offset="0.4" stop-color="#000" stop-opacity="0.36"/><stop offset="0.75" stop-color="#000" stop-opacity="0.1"/><stop offset="1" stop-color="#000" stop-opacity="0"/>
</radialGradient>
<linearGradient id="ball" x1="0" y1="0" x2="0" y2="1">
<stop offset="0" stop-color="#17626e"/><stop offset="0.4" stop-color="#12505a"/><stop offset="0.55" stop-color="#0b3a32"/><stop offset="0.75" stop-color="#07321a"/><stop offset="1" stop-color="#05260e"/>
</linearGradient>
<filter id="blur1"><feGaussianBlur stdDeviation="0.7"/></filter>
</defs>
<rect x="447" y="209" width="440" height="248" fill="#000"/>
<rect x="447" y="209" width="440" height="248" fill="url(#glow)"/>
<circle cx="632" cy="373" r="14.5" fill="url(#ball)" filter="url(#blur1)"/>
<ellipse cx="628.5" cy="456" rx="190" ry="72" fill="url(#disc)" filter="url(#blur1)"/>
<ellipse cx="630" cy="422" rx="85" ry="28" fill="url(#shadow)"/>
<ellipse cx="629.5" cy="417.5" rx="20" ry="5" fill="#020602" filter="url(#blur1)"/>
</svg>
<!-- status -->
<div class="t" style="left:550px;top:469px;font-weight:bold;color:#cacaca">size: 720 x 405 zoom: 0.611</div>
<div class="t" style="left:717px;top:469px;font-weight:bold;color:#cacaca;letter-spacing:0.25px">(mental ray)</div>
<div class="t" style="left:449px;top:485px;font-weight:bold;color:#cacaca">Frame: 0</div>
<div class="t" style="left:520px;top:485px;font-weight:bold;color:#cacaca;letter-spacing:0.15px">Render Time: 0:05</div>
<div class="t" style="left:642px;top:485px;font-weight:bold;color:#cacaca;letter-spacing:0.32px">Camera: persp</div>
<div class="t" style="left:745px;top:485px;font-weight:bold;color:#cacaca;letter-spacing:0.38px">Layers: masterLayer</div>
<!-- scrollbar -->
<div class="a" style="left:442px;top:503px;width:451px;height:15px;background:#353535"></div>
<svg class="a" style="left:442px;top:503px" width="451" height="15" viewBox="442 503 451 15">
<path d="M445,509 l5,-4.5 v9 z" fill="#b0b0b0"/>
<path d="M889.5,509.5 l-5,-4.5 v9 z" fill="#b0b0b0"/>
<rect x="455" y="504" width="211" height="13" rx="4.5" fill="#5c5c5c"/>
</svg>
</body></html>
